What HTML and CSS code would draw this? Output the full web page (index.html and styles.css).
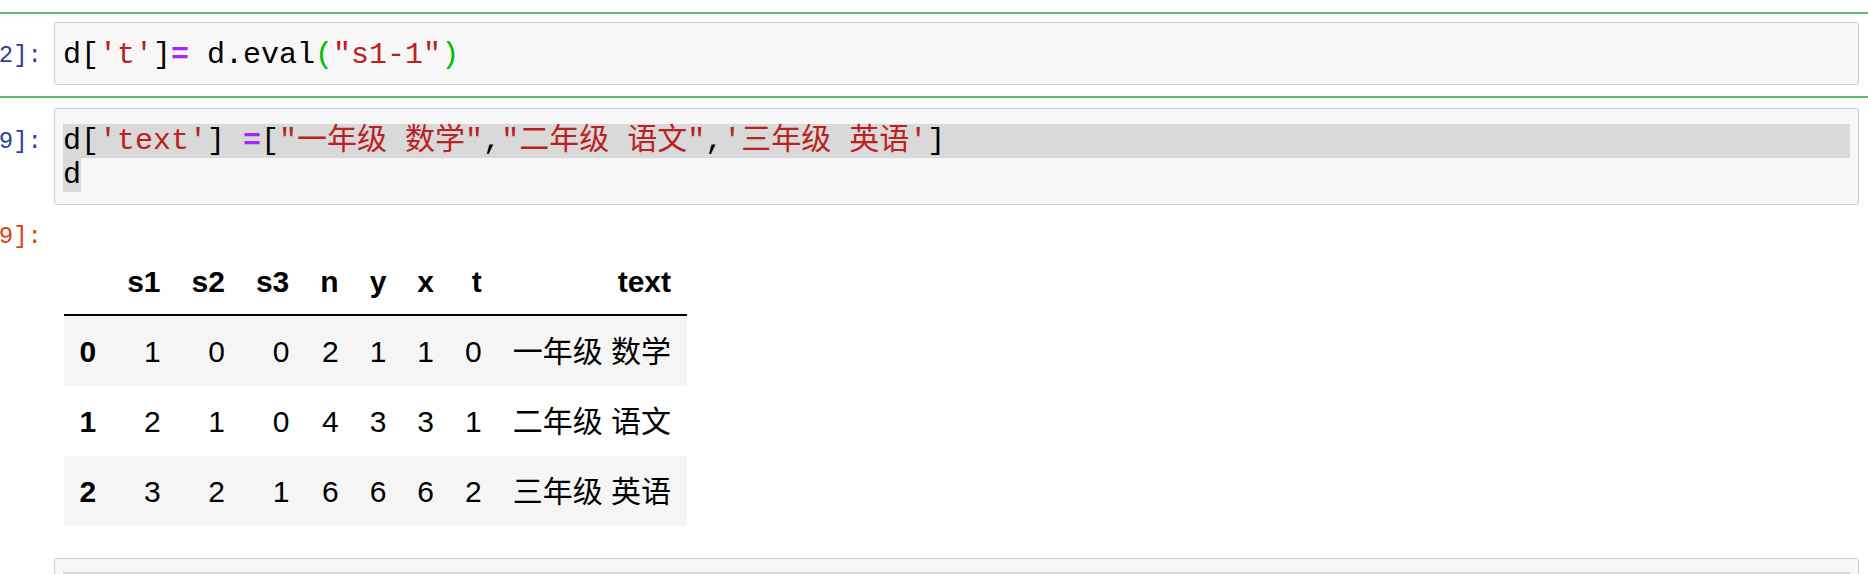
FILE: index.html
```html
<!DOCTYPE html>
<html lang="zh">
<head>
<meta charset="utf-8">
<title>Notebook</title>
<link rel="stylesheet" href="styles.css">
</head>
<body>
<div class="notebook">
  <div class="cell selected">
    <div class="row">
      <div class="prompt in"><span>In&nbsp;[12]:</span></div>
      <div class="input">
        <div class="code">
          <div class="line">d[<span class="s">'t'</span>]<span class="op">=</span> d.eval<span class="mb">(</span><span class="s">"s1-1"</span><span class="mb">)</span></div>
        </div>
      </div>
    </div>
  </div>

  <div class="cell">
    <div class="row">
      <div class="prompt in"><span>In&nbsp;[19]:</span></div>
      <div class="input">
        <div class="code">
          <div class="line selfull">d[<span class="s">'text'</span>] <span class="op">=</span>[<span class="s">"一年级 数学"</span>,<span class="s">"二年级 语文"</span>,<span class="s">'三年级 英语'</span>]</div>
          <div class="line"><span class="sel">d</span></div>
        </div>
      </div>
    </div>
    <div class="row">
      <div class="prompt out"><span>Out[19]:</span></div>
      <div class="output-area">
        <table class="df">
          <thead>
            <tr><th></th><th>s1</th><th>s2</th><th>s3</th><th>n</th><th>y</th><th>x</th><th>t</th><th>text</th></tr>
          </thead>
          <tbody>
            <tr><th>0</th><td>1</td><td>0</td><td>0</td><td>2</td><td>1</td><td>1</td><td>0</td><td>一年级 数学</td></tr>
            <tr><th>1</th><td>2</td><td>1</td><td>0</td><td>4</td><td>3</td><td>3</td><td>1</td><td>二年级 语文</td></tr>
            <tr><th>2</th><td>3</td><td>2</td><td>1</td><td>6</td><td>6</td><td>6</td><td>2</td><td>三年级 英语</td></tr>
          </tbody>
        </table>
      </div>
    </div>
  </div>

  <div class="cell">
    <div class="row">
      <div class="prompt in"><span>In&nbsp;[&nbsp;]:</span></div>
      <div class="input next">
        <div class="code">
          <div class="line selfull">&nbsp;</div>
        </div>
      </div>
    </div>
  </div>
</div>
</body>
</html>
```

FILE: styles.css
```css
html, body {
  margin: 0;
  padding: 0;
  height: 574px;
  overflow: hidden;
  background: #ffffff;
}

.notebook {
  display: flex;
  flex-direction: column;
}

.cell {
  padding-top: 10px;
}

.cell.selected {
  margin-top: 12px;
  padding: 8px 0 11px;
  border-top: 2px solid #66bb6a;
  border-bottom: 2px solid #66bb6a;
}

.row {
  display: flex;
  align-items: flex-start;
}

.prompt {
  flex: none;
  width: 54px;
  box-sizing: border-box;
  padding-right: 12px;
  display: flex;
  justify-content: flex-end;
  white-space: nowrap;
  font-family: "Liberation Mono", monospace;
  font-size: 24px;
  line-height: 34px;
}

.prompt.in {
  color: #303f9f;
  padding-top: 17px;
}

.prompt.out {
  color: #d84315;
  line-height: 28px;
  padding-top: 18px;
}

.input {
  flex: 1;
  min-width: 0;
  margin-right: 9px;
  border: 1px solid #cfcfcf;
  border-radius: 3px;
  background: #f7f7f7;
  padding: 15px 8px 12px;
}

.input.next {
  padding-top: 13px;
}

.code {
  font-family: "Liberation Mono", "Noto Sans CJK SC", monospace;
  font-size: 30px;
  line-height: 34px;
  color: #000000;
}

.line {
  height: 34px;
  white-space: pre;
}

.selfull {
  background: #d9d9d9;
}

.sel {
  display: inline-block;
  height: 34px;
  background: #d9d9d9;
}

.s {
  color: #ba2121;
}

.op {
  color: #aa22ff;
  font-weight: bold;
}

.mb {
  color: #00bb00;
}

.output-area {
  padding: 45px 0 22px 10px;
}

.df {
  border-collapse: separate;
  border-spacing: 0;
  font-family: "Liberation Sans", "Noto Sans CJK SC", sans-serif;
  font-size: 30px;
  color: #000000;
}

.df th,
.df td {
  text-align: right;
  vertical-align: middle;
  white-space: nowrap;
}

.df thead th {
  font-weight: bold;
  padding: 15px 15.5px;
  line-height: 34px;
  vertical-align: bottom;
  border-bottom: 2px solid #000000;
}

.df tbody th,
.df tbody td {
  padding: 15.5px;
  line-height: 39px;
}

.df tbody th {
  font-weight: bold;
}

.df tbody td {
  font-weight: normal;
}

.df tbody tr:nth-child(odd) {
  background: #f5f5f5;
}
```
